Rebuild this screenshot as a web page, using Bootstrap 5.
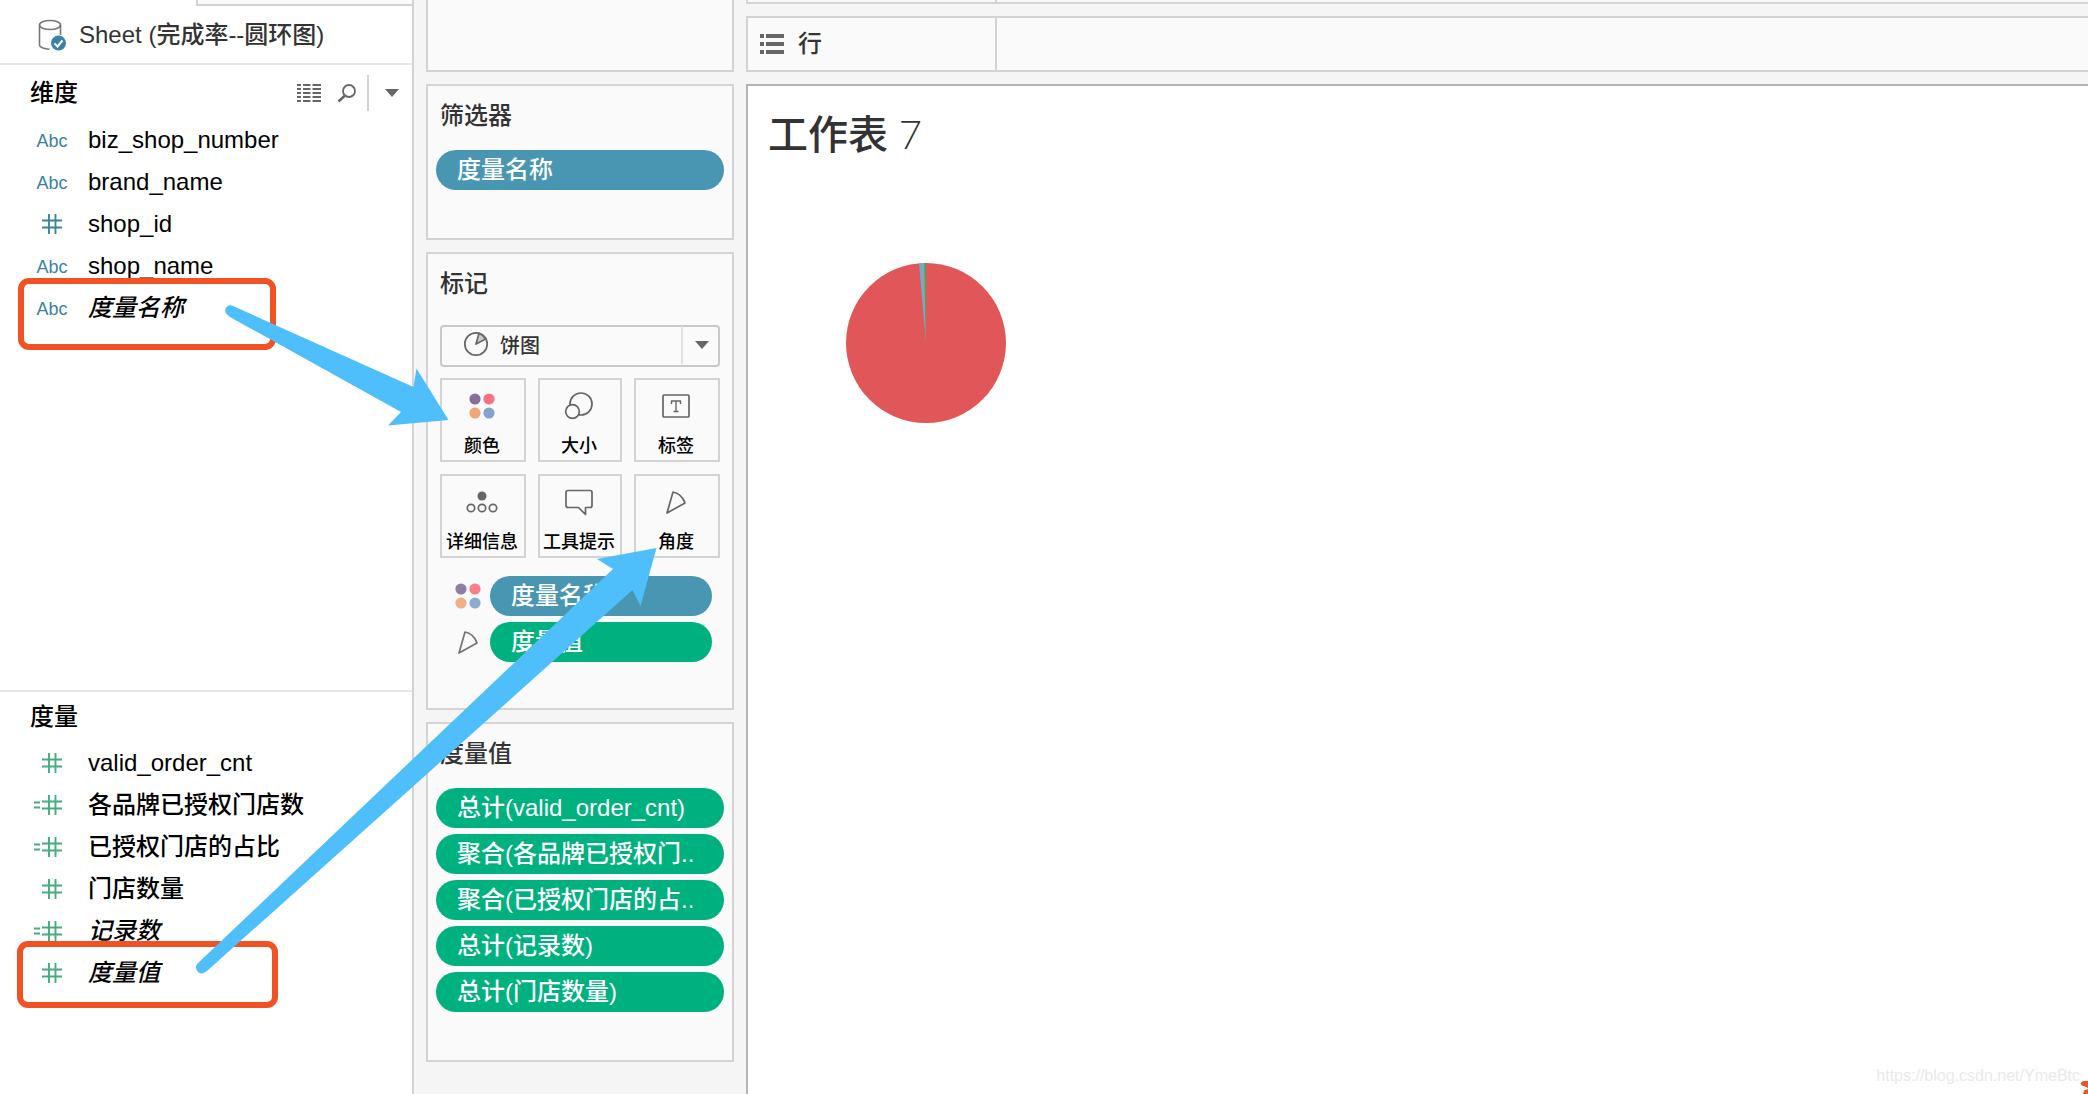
<!DOCTYPE html>
<html lang="zh-CN">
<head>
<meta charset="utf-8">
<meta name="viewport" content="width=device-width, initial-scale=1">
<title>工作表 7</title>
<link href="https://cdn.jsdelivr.net/npm/bootstrap@5.3.0/dist/css/bootstrap.min.css" rel="stylesheet">
<style>
:root{--line:#d3d3d3;--ink:#333;--dim:#4996b2;--mea:#00b180}
body{font-family:"Liberation Sans","Noto Sans CJK SC",sans-serif;font-size:24px;line-height:42px;color:#000;background:#f5f5f5;font-weight:500}
svg{display:block;flex:none}
.workspace{height:100vh;min-height:1094px;overflow:hidden}
.data-pane{width:414px;flex:none;background:#fff;border-right:2px solid var(--line)}
.pane-tab{width:216px;height:6px;background:#f9f9f9;border:solid var(--line);border-width:0 0 2px 2px}
.source{height:59px;padding:0 0 0 38px;border-bottom:2px solid #e6e6e6;color:var(--ink);gap:12px;line-height:56px}
.pane-head{padding:2px 13px 0 30px;height:54px;line-height:56px}
.pane-head h2,.panel h2{font-size:24px;font-weight:500;line-height:inherit;margin:0}
.tool{border:0;background:none;padding:0;display:flex}
.tool-split{width:2px;height:36px;margin:0 16px 0 10px;background:var(--line)}
.measures{height:404px;border-top:2px solid #e6e6e6}
.measures .pane-head{padding-top:0;height:50px;line-height:50px}
.field{height:42px;line-height:42px;padding-left:34px}
.field a{color:#000;text-decoration:none;white-space:nowrap}
.ftype{width:36px;margin-right:18px;flex:none;font-size:18px;color:#3a82a2;text-align:center;font-weight:400;display:flex;justify-content:center;line-height:44px}
.measures .ftype{color:#46ab81;justify-content:flex-end;padding-right:8px}
.shelf-pane{width:332px;flex:none;padding:0 12px;gap:12px}
.panel{background:#fafafa;border:2px solid var(--line);color:var(--ink)}
.panel h2{padding-left:12px;line-height:60px;height:64px}
.p-top{height:72px;border-top:0}
.p-filter{height:156px}
.p-marks{height:458px}
.p-values{height:340px}
.pill{display:block;height:40px;line-height:40px;border:0;border-radius:20px;color:#fff;padding:0 21px;text-align:left;background:var(--mea);white-space:nowrap;overflow:hidden;font-weight:500}
.pill-dim{background:var(--dim)}
.pill-list{padding:0 8px;gap:6px}
.mark-type{margin:6px 12px 12px;height:42px}
.mark-type select{width:100%;height:42px;border:2px solid #c8c8c8;border-radius:4px;background:#fafafa;font-size:20px;line-height:38px;padding:0 0 0 58px;color:var(--ink);appearance:none;font-weight:500}
.mark-type .pie-ico{position:absolute;left:23px;top:7px;pointer-events:none}
.mark-type .drop{position:absolute;right:0;top:2px;width:39px;height:38px;border-left:2px solid #e0e0e0;pointer-events:none}
.mark-grid{display:grid;grid-template-columns:43fr 42fr 43fr;gap:12px;margin:0 12px 18px}
.mark-btn{height:84px;border:2px solid var(--line);background:#fafafa;padding:10px 2px 0 0;font-size:18px;line-height:26px;color:#000;font-weight:500;white-space:nowrap;display:flex;flex-direction:column;align-items:center}
.mark-btn svg{margin-bottom:11px}
.enc{padding:0 20px 6px 20px}
.enc .pill{flex:1}
.enc svg{margin:0 8px 0 0}
.shelf{border:2px solid var(--line);border-right:0;background:#fafafa;height:56px;color:var(--ink)}
.shelf-cap{width:249px;border-right:2px solid var(--line);padding-left:12px;gap:14px}
.shelf-cols{height:4px;border-top:0;margin-bottom:12px}
.sheet{margin-top:12px;background:#fff;border:solid #b3b3b3;border-width:2px 0 0 2px;color:var(--ink)}
.sheet h1{font-size:40px;font-weight:500;line-height:60px;margin:18px 0 0 20px}
.sheet h1 span{font-family:Lato,sans-serif;font-weight:300}
.pie{margin:98px 0 0 98px}
.watermark{position:absolute;right:8px;bottom:7px;font-size:16px;line-height:22px;color:#e9e9e9;font-weight:400}
.notes{position:absolute;left:0;top:0;pointer-events:none}
.corner{position:absolute;right:0;bottom:0}
</style>
<script src="https://cdn.jsdelivr.net/npm/bootstrap@5.3.0/dist/js/bootstrap.bundle.min.js"></script>
</head>
<body>
<svg width="0" height="0" class="position-absolute">
<defs>
<symbol id="hash" viewBox="0 0 20 20"><path d="M7 0v20M13.500 0v20M0 6.500h20M0 13.500h20" stroke="currentColor" stroke-width="1.900" fill="none"/></symbol>
<symbol id="calc" viewBox="0 0 28 20"><path d="M15 0v20M21.500 0v20M8 6.500h20M8 13.500h20M0 7.500h6M0 12.500h6" stroke="currentColor" stroke-width="1.900" fill="none"/></symbol>
<symbol id="dots" viewBox="0 0 26 26"><circle cx="6" cy="6" r="5.600" fill="#86709a"/><circle cx="20" cy="6" r="5.600" fill="#fa7281"/><circle cx="6" cy="20" r="5.600" fill="#f2a678"/><circle cx="20" cy="20" r="5.600" fill="#82a3cb"/></symbol>
<symbol id="angle" viewBox="0 0 28 28"><path d="M5 25 11 4Q20 6 23 15Z" fill="none" stroke="#666" stroke-width="1.700" stroke-linejoin="round"/></symbol>
<symbol id="caret" viewBox="0 0 14 8"><path d="M0 0h14L7 8z" fill="#666"/></symbol>
</defs>
</svg>
<div class="workspace position-relative d-flex">
  <aside class="data-pane d-flex flex-column">
    <div class="pane-tab ms-auto"></div>
    <div class="source d-flex align-items-center">
      <svg width="29" height="32" viewBox="0 0 29 32" fill="none" stroke="#777" stroke-width="1.600"><ellipse cx="12" cy="6" rx="10.500" ry="4.500"/><path d="M1.500 6v20c0 2 4 4 10 4.300M22.500 6v10"/><circle cx="20.500" cy="24" r="7.500" fill="#3a82a2" stroke="none"/><path d="m16.500 24.500 3 3 5-6" stroke="#fff" stroke-width="2"/></svg>
      <span>Sheet (完成率--圆环图)</span>
    </div>
    <section class="flex-grow-1">
      <div class="pane-head d-flex align-items-center">
        <h2 class="me-auto">维度</h2>
        <button class="tool" aria-label="查看数据"><svg width="24" height="18" viewBox="0 0 24 18" stroke="#666" stroke-width="2"><path d="M0 1h24M0 5h24M0 9h24M0 13h24M0 17h24"/><path d="M5 0v18M14.500 0v18" stroke="#fff"/></svg></button>
        <button class="tool ms-3" aria-label="查找"><svg width="20" height="20" viewBox="0 0 20 20" fill="none" stroke="#666" stroke-width="1.800"><circle cx="12" cy="8" r="6"/><path d="M8 12.500 1.500 18.500" stroke-width="2.600"/></svg></button>
        <span class="tool-split"></span>
        <button class="tool" aria-label="菜单"><svg width="14" height="8"><use href="#caret"/></svg></button>
      </div>
      <div class="field d-flex"><span class="ftype">Abc</span><a href="#">biz_shop_number</a></div>
      <div class="field d-flex"><span class="ftype">Abc</span><a href="#">brand_name</a></div>
      <div class="field d-flex align-items-center"><span class="ftype"><svg width="20" height="20"><use href="#hash"/></svg></span><a href="#">shop_id</a></div>
      <div class="field d-flex"><span class="ftype">Abc</span><a href="#">shop_name</a></div>
      <div class="field d-flex"><span class="ftype">Abc</span><a href="#" class="fst-italic">度量名称</a></div>
    </section>
    <section class="measures">
      <div class="pane-head"><h2>度量</h2></div>
      <div class="field d-flex align-items-center"><span class="ftype"><svg width="20" height="20"><use href="#hash"/></svg></span><a href="#">valid_order_cnt</a></div>
      <div class="field d-flex align-items-center"><span class="ftype"><svg width="28" height="20"><use href="#calc"/></svg></span><a href="#">各品牌已授权门店数</a></div>
      <div class="field d-flex align-items-center"><span class="ftype"><svg width="28" height="20"><use href="#calc"/></svg></span><a href="#">已授权门店的占比</a></div>
      <div class="field d-flex align-items-center"><span class="ftype"><svg width="20" height="20"><use href="#hash"/></svg></span><a href="#">门店数量</a></div>
      <div class="field d-flex align-items-center"><span class="ftype"><svg width="28" height="20"><use href="#calc"/></svg></span><a href="#" class="fst-italic">记录数</a></div>
      <div class="field d-flex align-items-center"><span class="ftype"><svg width="20" height="20"><use href="#hash"/></svg></span><a href="#" class="fst-italic">度量值</a></div>
    </section>
  </aside>
  <div class="shelf-pane d-flex flex-column">
    <div class="panel p-top"></div>
    <section class="panel p-filter">
      <h2>筛选器</h2>
      <div class="pill-list d-flex flex-column"><button class="pill pill-dim">度量名称</button></div>
    </section>
    <section class="panel p-marks">
      <h2>标记</h2>
      <div class="mark-type position-relative">
        <select aria-label="标记类型"><option>饼图</option></select>
        <svg class="pie-ico" width="26" height="26" viewBox="0 0 26 26" fill="none" stroke="#666" stroke-width="1.700"><circle cx="13" cy="13" r="11.200"/><path d="M13 13 16 2.200Q20.500 4 22.700 8Z" fill="#ccc" stroke-linejoin="round"/></svg>
        <span class="drop d-flex align-items-center justify-content-center"><svg width="14" height="8"><use href="#caret"/></svg></span>
      </div>
      <div class="mark-grid">
        <button class="mark-btn"><svg width="26" height="32" viewBox="0 -3 26 32"><use href="#dots" width="26" height="26"/></svg>颜色</button>
        <button class="mark-btn"><svg width="30" height="32" viewBox="0 0 30 32" fill="#fafafa" stroke="#666" stroke-width="1.700"><circle cx="17" cy="14" r="11"/><circle cx="8.500" cy="21.500" r="6.800"/></svg>大小</button>
        <button class="mark-btn"><svg width="28" height="32" viewBox="0 0 28 32" fill="none" stroke="#666" stroke-width="1.700"><rect x="1" y="5" width="26" height="22" rx="1"/><path d="M9.500 14v-3h9v3M14 11v10.500M11.500 21.500h5" stroke-width="1.400"/></svg>标签</button>
        <button class="mark-btn"><svg width="32" height="32" viewBox="0 0 32 32" fill="none" stroke="#666" stroke-width="1.700"><circle cx="16" cy="10" r="4.500" fill="#666" stroke="none"/><circle cx="5" cy="22" r="3.700"/><circle cx="16" cy="22" r="3.700"/><circle cx="27" cy="22" r="3.700"/></svg>详细信息</button>
        <button class="mark-btn"><svg width="28" height="32" viewBox="0 0 28 32" fill="none" stroke="#666" stroke-width="1.700" stroke-linejoin="round"><path d="M3 4.500h22q2 0 2 2v13q0 2-2 2h-4.500v7l-7-7H3q-2 0-2-2v-13q0-2 2-2z"/></svg>工具提示</button>
        <button class="mark-btn"><svg width="28" height="32" viewBox="0 -2 28 32"><use href="#angle" width="28" height="28"/></svg>角度</button>
      </div>
      <div class="enc d-flex align-items-center"><svg width="34" height="26" viewBox="-7 0 34 26" opacity="0.900"><use href="#dots" width="26" height="26"/></svg><button class="pill pill-dim">度量名称</button></div>
      <div class="enc d-flex align-items-center"><svg width="34" height="28" viewBox="-6 0 34 28" opacity="0.900"><use href="#angle" width="28" height="28"/></svg><button class="pill">度量值</button></div>
    </section>
    <section class="panel p-values">
      <h2>度量值</h2>
      <div class="pill-list d-flex flex-column">
        <button class="pill">总计(valid_order_cnt)</button>
        <button class="pill">聚合(各品牌已授权门..</button>
        <button class="pill">聚合(已授权门店的占..</button>
        <button class="pill">总计(记录数)</button>
        <button class="pill">总计(门店数量)</button>
      </div>
    </section>
  </div>
  <main class="flex-grow-1 d-flex flex-column">
    <div class="shelf shelf-cols d-flex"><div class="shelf-cap"></div></div>
    <div class="shelf d-flex">
      <div class="shelf-cap d-flex align-items-center">
        <svg width="24" height="20" viewBox="0 0 24 20" fill="#666"><path d="M0 0h4v4H0zM6 0h18v4H6zM0 8h4v4H0zM6 8h18v4H6zM0 16h4v4H0zM6 16h18v4H6z"/></svg>
        <span>行</span>
      </div>
    </div>
    <div class="sheet flex-grow-1">
      <h1>工作表<span> 7</span></h1>
      <svg class="pie" width="160" height="160" viewBox="-80 -80 160 160"><circle r="80" fill="#e15759"/><path d="M0 0-7-79.700A80 80 0 0 1-2.200-80Z" fill="#76a9c4"/><path d="M0 0-2.500-80A80 80 0 0 1-1.500-80Z" fill="#76b7b2"/><path d="M0 0-1.800-80A80 80 0 0 1 0-80Z" fill="#59a14f"/></svg>
    </div>
  </main>
  <svg class="notes" width="700" height="1094" viewBox="0 0 700 1094">
    <g fill="none" stroke="#f05223" stroke-width="6"><rect x="21" y="281" width="252" height="66" rx="8"/><rect x="20" y="944" width="255" height="61" rx="8"/></g>
    <g fill="#4fbffb"><path d="M232 305.500 413.500 387 416.500 368.500 448.500 420 388 425.500 401 412 230 317Q224 313 225.500 308.500 228 304 232 305.500Z"/><path d="M197 964 613 569 597 559 656.500 548 640.500 606 632.500 590 207 971Q203 974.500 199 973 194 969 197 964Z"/></g>
  </svg>
  <span class="watermark">https://blog.csdn.net/YmeBtc</span>
  <svg class="corner" width="8" height="13" viewBox="0 0 8 13" fill="#f05223"><path d="M8 0H4Q0 1 1 3.500 2 5 5 5.500L8 7zM8 8 4 9.500 3 13h5z"/></svg>
</div>
</body>
</html>
